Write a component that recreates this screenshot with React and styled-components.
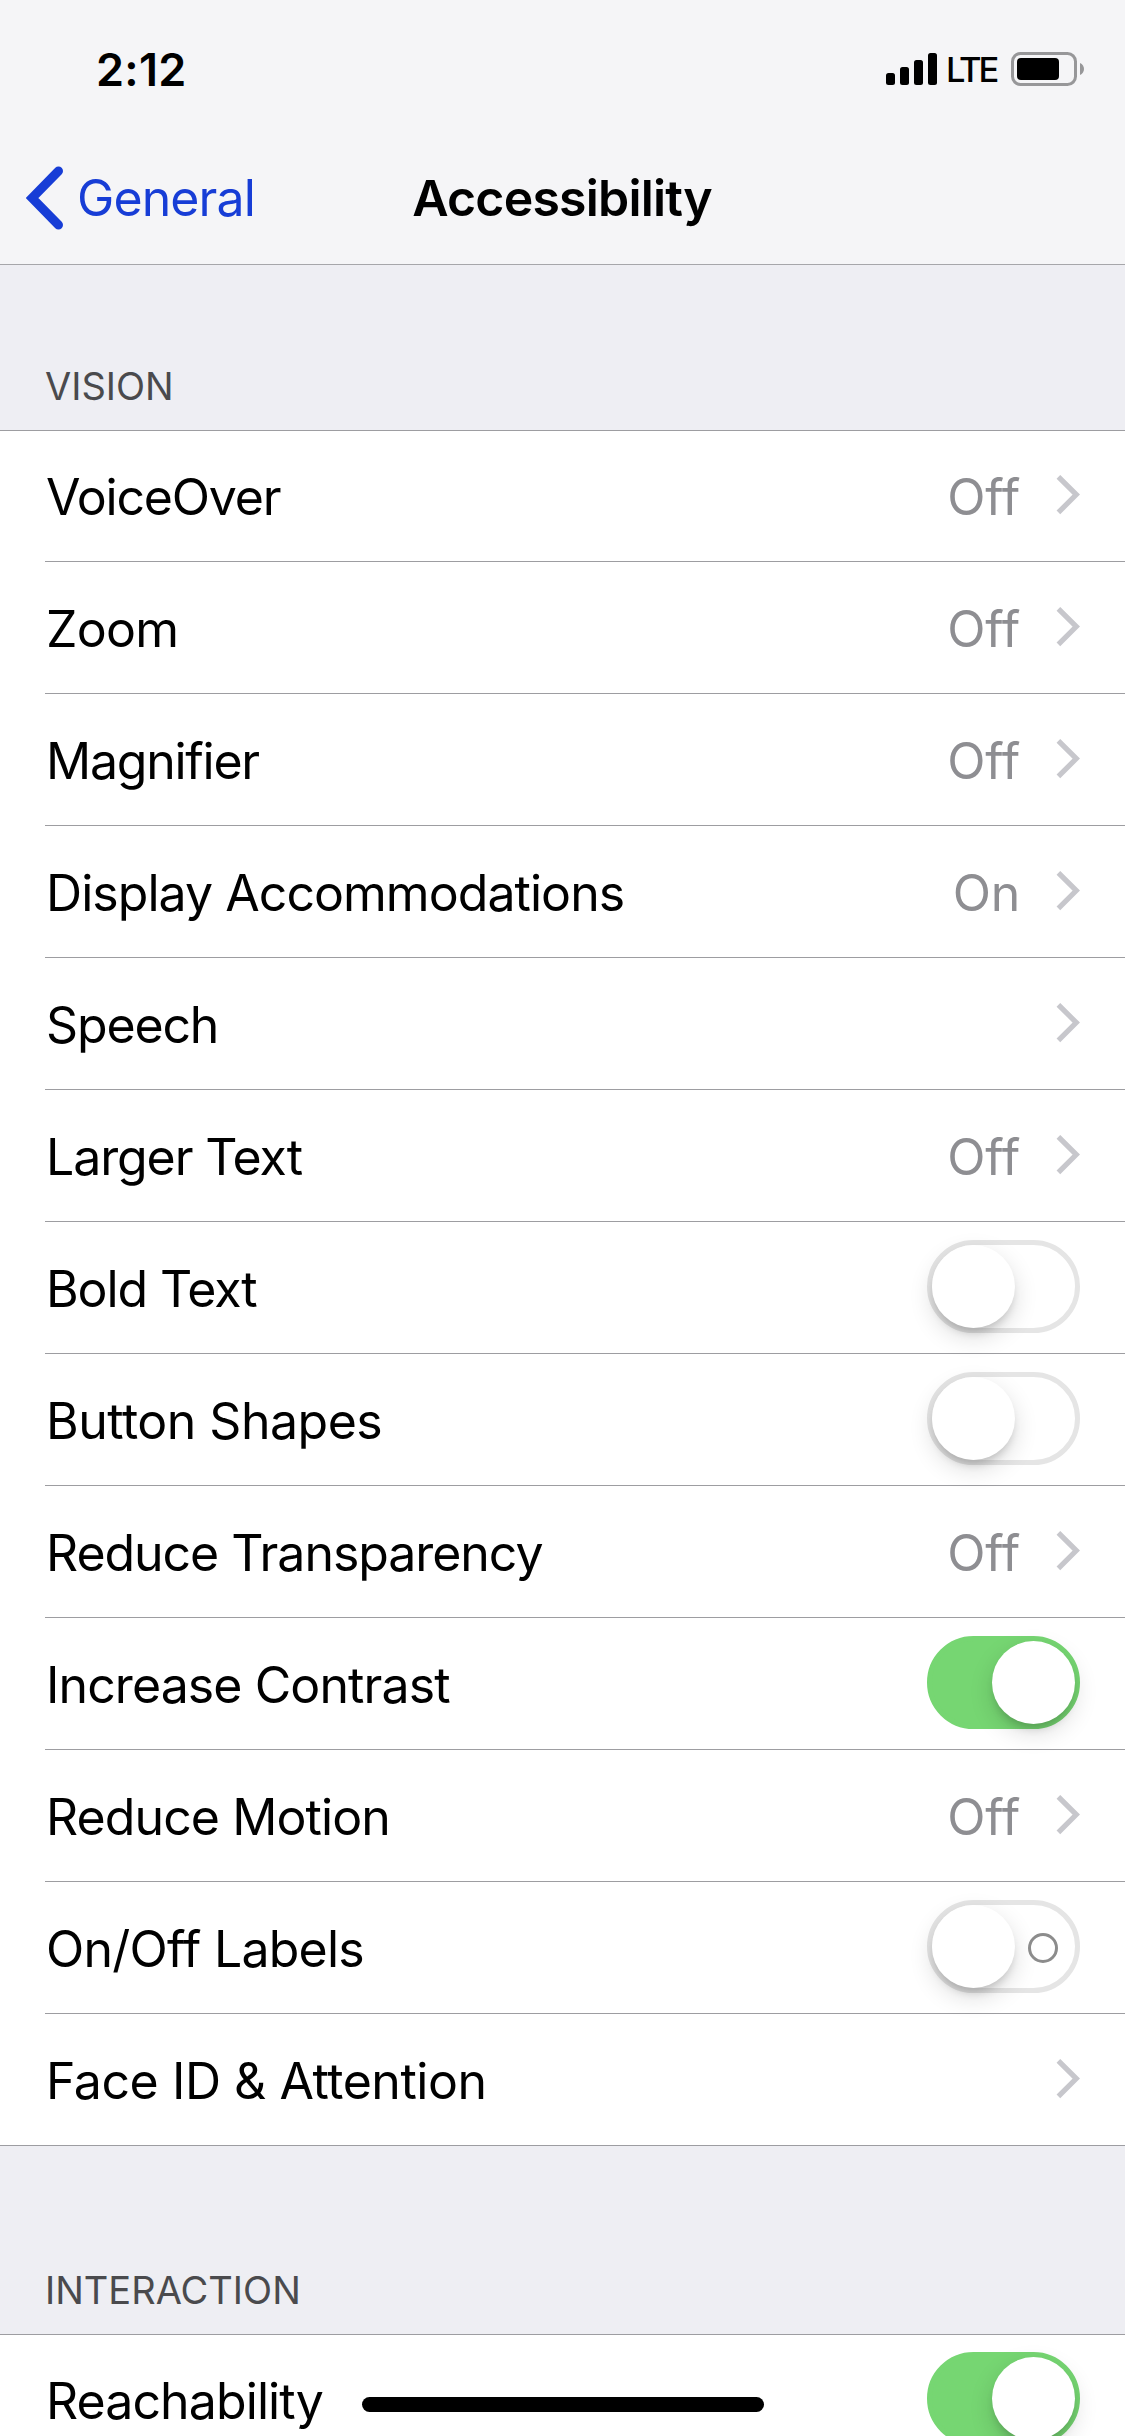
import React from 'react';
import styled, { createGlobalStyle } from 'styled-components';

const GlobalStyle = createGlobalStyle`
  * {
    box-sizing: border-box;
  }

  body {
    margin: 0;
    background: #eeeef3;
    font-family: Inter, 'Liberation Sans', sans-serif;
    color: #000;
  }
`;

// Styled Components
const Screen = styled.div`
  position: relative;
  width: 1125px;
  height: 2436px;
  overflow: hidden;
  background: #eeeef3;
`;

const Header = styled.header`
  height: 265px;
  background: #f5f5f7;
  border-bottom: 1px solid #a6a6aa;
`;

const StatusBar = styled.div`
  display: flex;
  justify-content: space-between;
  align-items: center;
  height: 132px;
  padding: 6px 41px 0 96px;
`;

const Time = styled.span`
  font-size: 45px;
  font-weight: 600;
  letter-spacing: 0.3px;
`;

const StatusIcons = styled.div`
  display: flex;
  align-items: center;
  gap: 8px;
`;

const Carrier = styled.span`
  width: 57px;
  padding: 1px 0 0;
  font-size: 34.5px;
  font-weight: 500;
  letter-spacing: -3.2px;
`;

const NavBar = styled.nav`
  display: grid;
  grid-template-columns: 1fr auto 1fr;
  align-items: center;
  height: 132px;
  padding: 0 27px 0 26px;
`;

const BackButton = styled.a`
  display: flex;
  align-items: center;
  gap: 13px;
  color: #173dd6;
  font-size: 50px;
  letter-spacing: -0.9px;
`;

const Title = styled.h1`
  margin: 0;
  font-size: 50px;
  font-weight: 600;
  letter-spacing: -0.8px;
`;

const SectionTitle = styled.h2`
  display: flex;
  align-items: flex-end;
  height: ${({ $first }) => ($first ? '165px' : '188px')};
  margin: 0;
  padding: 0 45px 21px;
  color: #4a4a4d;
  font-size: 38px;
  font-weight: 400;
  letter-spacing: 0;
`;

const List = styled.ul`
  margin: 0;
  padding: 0;
  list-style: none;
  background: #fff;
  box-shadow: inset 0 1px #9d9da1;
`;

const Row = styled.li`
  height: 132px;
  padding-left: 45px;

  &:last-child {
    padding-left: 0;
    border-bottom: 1px solid #9d9da1;
  }
`;

const RowBody = styled.div`
  display: flex;
  align-items: center;
  height: 132px;
  padding-right: 45px;
  border-bottom: 1px solid #9d9da1;

  ${Row}:last-child & {
    height: 131px;
    padding-left: 45px;
    border-bottom: none;
  }
`;

const Label = styled.span`
  flex: 1;
  padding: 3px 0 0 1px;
  font-size: 50px;
  letter-spacing: ${({ $spacing }) => $spacing || '-0.9px'};
  white-space: nowrap;
`;

const Value = styled.span`
  padding-top: 3px;
  margin-right: 36px;
  color: #8e8e92;
  font-size: 50px;
  letter-spacing: -0.2px;
`;

const Track = styled.span`
  display: flex;
  align-items: center;
  justify-content: ${({ $on }) => ($on ? 'flex-end' : 'space-between')};
  width: 153px;
  height: 93px;
  margin-bottom: 2px;
  padding-right: ${({ $on }) => ($on ? '0' : '17px')};
  border: 5px solid ${({ $on }) => ($on ? '#76d672' : '#e5e5e5')};
  border-radius: 47px;
  background: ${({ $on }) => ($on ? '#76d672' : '#fff')};
`;

const Knob = styled.span`
  width: 83px;
  height: 83px;
  border-radius: 50%;
  background: #fff;
  box-shadow: 0 9px 24px rgba(0, 0, 0, 0.14), 0 7px 8px -3px rgba(0, 0, 0, 0.17);
`;

const OffMark = styled.span`
  width: 30px;
  height: 30px;
  margin-top: 3px;
  border: 3px solid #8c8c8c;
  border-radius: 50%;
`;

const HomeIndicator = styled.div`
  position: absolute;
  left: 362px;
  bottom: 24px;
  width: 402px;
  height: 15px;
  border-radius: 8px;
  background: #000;
`;

const visionRows = [
  { label: 'VoiceOver', value: 'Off', spacing: '-1.2px' },
  { label: 'Zoom', value: 'Off', spacing: '-0.7px' },
  { label: 'Magnifier', value: 'Off', spacing: '-1.25px' },
  { label: 'Display Accommodations', value: 'On', spacing: '-0.95px' },
  { label: 'Speech', spacing: '-1.15px' },
  { label: 'Larger Text', value: 'Off', spacing: '-1.1px' },
  { label: 'Bold Text', toggle: true, spacing: '-1.1px' },
  { label: 'Button Shapes', toggle: true, spacing: '-0.5px' },
  { label: 'Reduce Transparency', value: 'Off', spacing: '-1.05px' },
  { label: 'Increase Contrast', toggle: true, on: true },
  { label: 'Reduce Motion', value: 'Off' },
  { label: 'On/Off Labels', toggle: true, mark: true, spacing: '-0.75px' },
  { label: 'Face ID & Attention', spacing: '-0.45px' },
];

const interactionRows = [{ label: 'Reachability', toggle: true, on: true }];

function Signal() {
  return (
    <svg width="52" height="34" viewBox="0 0 52 34">
      <rect x="0" y="21" width="9" height="12" rx="2.5" />
      <rect x="14" y="15" width="9" height="18" rx="2.5" />
      <rect x="28" y="8" width="9" height="25" rx="2.5" />
      <rect x="42" y="1" width="9" height="32" rx="2.5" />
    </svg>
  );
}

function Battery() {
  return (
    <svg width="73" height="34" viewBox="0 0 73 34">
      <rect x="1.5" y="1.5" width="63" height="31" rx="8" fill="none" stroke="#979799" strokeWidth="3" />
      <rect x="6" y="6" width="42" height="22" rx="4" />
      <path d="M69 11c2.600 1.200 4 3.400 4 6s-1.400 4.800-4 6z" fill="#979799" />
    </svg>
  );
}

function BackArrow() {
  return (
    <svg width="38" height="64" viewBox="0 0 38 64">
      <path d="M32.500 5L6 32l26.500 27" fill="none" stroke="#173dd6" strokeWidth="9" strokeLinecap="round" />
    </svg>
  );
}

const ChevronIcon = styled.svg`
  margin-bottom: 1px;
`;

function Chevron() {
  return (
    <ChevronIcon width="24" height="40" viewBox="0 0 24 40">
      <path d="M2.400 1.800L20.300 19.600L2.400 37.400" fill="none" stroke="#c7c7cc" strokeWidth="5.200" />
    </ChevronIcon>
  );
}

function Toggle({ on, mark }) {
  return (
    <Track $on={on}>
      <Knob />
      {mark && <OffMark />}
    </Track>
  );
}

function SettingsList({ rows }) {
  return (
    <List>
      {rows.map((row) => (
        <Row key={row.label}>
          <RowBody>
            <Label $spacing={row.spacing}>{row.label}</Label>
            {row.value && <Value>{row.value}</Value>}
            {row.toggle ? <Toggle on={row.on} mark={row.mark} /> : <Chevron />}
          </RowBody>
        </Row>
      ))}
    </List>
  );
}

function App() {
  return (
    <Screen>
      <GlobalStyle />
      {/* Status and navigation bars */}
      <Header>
        <StatusBar>
          <Time>2:12</Time>
          <StatusIcons>
            <Signal />
            <Carrier>LTE</Carrier>
            <Battery />
          </StatusIcons>
        </StatusBar>
        <NavBar>
          <BackButton>
            <BackArrow />
            General
          </BackButton>
          <Title>Accessibility</Title>
        </NavBar>
      </Header>

      {/* Settings */}
      <SectionTitle $first>VISION</SectionTitle>
      <SettingsList rows={visionRows} />
      <SectionTitle>INTERACTION</SectionTitle>
      <SettingsList rows={interactionRows} />

      <HomeIndicator />
    </Screen>
  );
}

export default App;
